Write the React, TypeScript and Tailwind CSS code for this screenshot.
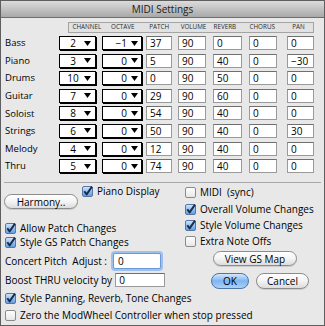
import React from "react";

const rows = [
  { name: "Bass", ch: "2", oct: "-1", vals: ["37", "90", "0", "0", "0"] },
  { name: "Piano", ch: "3", oct: "0", vals: ["5", "90", "40", "0", "-30"] },
  { name: "Drums", ch: "10", oct: "0", vals: ["0", "90", "50", "0", "0"] },
  { name: "Guitar", ch: "7", oct: "0", vals: ["29", "90", "60", "0", "0"] },
  { name: "Soloist", ch: "8", oct: "0", vals: ["54", "90", "40", "0", "0"] },
  { name: "Strings", ch: "6", oct: "0", vals: ["50", "90", "40", "0", "30"] },
  { name: "Melody", ch: "4", oct: "0", vals: ["12", "90", "40", "0", "0"] },
  { name: "Thru", ch: "5", oct: "0", vals: ["74", "90", "40", "0", "0"] },
];

const Tri = () => (
  <svg width="7" height="5" viewBox="0 0 7 5" className="shrink-0">
    <polygon points="0,0 7,0 3.5,5" fill="#000" />
  </svg>
);

const Box = ({ v, cls }: { v: string; cls: string }) => (
  <div
    className={`h-[14px] ${cls} bg-white border border-[#9a9a9a] border-t-[#6f6f6f] flex items-center pl-[3px] text-[10px] leading-none text-black`}
  >
    {v}
  </div>
);

const Check = ({ on }: { on: boolean }) =>
  on ? (
    <svg width="11" height="11" viewBox="0 0 11 11" className="shrink-0 overflow-visible">
      <defs>
        <linearGradient id="cbg" x1="0" y1="0" x2="0" y2="1">
          <stop offset="0" stopColor="#d6e8fb" />
          <stop offset="0.5" stopColor="#93bff0" />
          <stop offset="1" stopColor="#5f9be2" />
        </linearGradient>
      </defs>
      <rect x="0.5" y="0.5" width="10" height="10" rx="1.5" fill="url(#cbg)" stroke="#5576a6" />
      <path d="M2.3 5.2 L4.6 8.4 L10 0.6" stroke="#1a2b47" strokeWidth="1.9" fill="none" strokeLinejoin="round" />
    </svg>
  ) : (
    <svg width="11" height="11" viewBox="0 0 11 11" className="shrink-0">
      <defs>
        <linearGradient id="cbw" x1="0" y1="0" x2="0" y2="1">
          <stop offset="0" stopColor="#ffffff" />
          <stop offset="1" stopColor="#e6e6e6" />
        </linearGradient>
      </defs>
      <rect x="0.5" y="0.5" width="10" height="10" rx="1.5" fill="url(#cbw)" stroke="#8a8a8a" />
    </svg>
  );

const CB = ({ on, label, cls = "" }: { on: boolean; label: string; cls?: string }) => (
  <div className={`h-[14px] flex items-center gap-[4px] text-[10px] leading-none text-black whitespace-nowrap ${cls}`}>
    <Check on={on} />
    <span>{label}</span>
  </div>
);

const Pill = ({ label, cls }: { label: string; cls: string }) => (
  <div
    className={`${cls} rounded-full border border-[#8c8c8c] bg-gradient-to-b from-[#ffffff] via-[#f4f4f4] to-[#dcdcdc] flex items-center justify-center text-[10px] leading-none text-black shadow-[0_1px_0_rgba(0,0,0,0.12)]`}
  >
    {label}
  </div>
);

export default function App() {
  return (
    <div
      className="w-[325px] h-[326px] overflow-hidden bg-[#e8e8e8] border border-[#5e5e5e] flex flex-col"
      style={{ fontFamily: '"Open Sans", "DejaVu Sans", sans-serif' }}
    >
      {/* title */}
      <div className="h-[17px] shrink-0 bg-gradient-to-b from-[#dcdcdc] to-[#a9a9a9] border-b border-[#6e6e6e] flex items-center justify-center text-[10px] text-[#1a1a1a] leading-none">
        MIDI Settings
      </div>

      {/* header */}
      <div className="mt-[4px] ml-[67px] w-[246px] h-[11px] border border-[#a4a4a4] bg-[#e2e2e2] flex items-center text-[6.3px] leading-none text-[#2a2a2a]">
        <span className="w-[36px] text-center">CHANNEL</span>
        <span className="w-[36px] text-center">OCTAVE</span>
        <span className="w-[37px] text-center">PATCH</span>
        <span className="w-[32px] text-center">VOLUME</span>
        <span className="w-[31px] text-center">REVERB</span>
        <span className="w-[44px] text-center">CHORUS</span>
        <span className="w-[29px] text-center">PAN</span>
      </div>

      {/* rows */}
      <div className="mt-[3px] flex flex-col gap-[3.6px]">
        {rows.map((r) => (
          <div key={r.name} className="h-[14px] flex items-center">
            <div className="w-[58px] pl-[4px] text-[9.5px] leading-none text-black">{r.name}</div>
            <div className="w-[37px] h-[14px] bg-white border border-black shadow-[1px_1px_0_#000] flex items-center pr-[4px] text-[10px] leading-none">
              <span className="flex-1 text-center pl-[2px]">{r.ch}</span>
              <Tri />
            </div>
            <div className="ml-[6px] w-[40px] h-[14px] bg-white border border-black shadow-[1px_1px_0_#000] flex items-center justify-end pr-[3px] gap-[4px] text-[10px] leading-none">
              <span>{r.oct === "-1" ? "\u22121" : r.oct}</span>
              <Tri />
            </div>
            <Box v={r.vals[0]} cls="ml-[4px] w-[26px]" />
            <Box v={r.vals[1]} cls="ml-[6px] w-[28px]" />
            <Box v={r.vals[2]} cls="ml-[7px] w-[29px]" />
            <Box v={r.vals[3]} cls="ml-[7px] w-[28px]" />
            <Box v={r.vals[4] === "-30" ? "\u221230" : r.vals[4]} cls="ml-[10px] w-[27px]" />
          </div>
        ))}
      </div>

      {/* separator */}
      <div className="mt-[9px] mx-[3px] h-[1px] bg-[#a8a8a8] shrink-0" />

      {/* lower section */}
      <div className="flex">
        <div className="w-[184px] flex flex-col">
          <div className="flex items-start">
            <Pill label="Harmony.." cls="mt-[11px] ml-[3px] w-[74px] h-[15px]" />
            <CB on label="Piano Display" cls="ml-[4px] mt-[1px]" />
          </div>
          <CB on label="Allow Patch Changes" cls="mt-[12px] ml-[4px]" />
          <CB on label="Style GS Patch Changes" cls="ml-[4px]" />
          <div className="mt-[4px] flex items-center h-[16px] text-[10px] leading-none">
            <span className="ml-[4px] whitespace-pre">Concert Pitch  Adjust :</span>
            <div className="ml-[6px] w-[48px] h-[16px] rounded-[2px] border border-[#6d9ad6] shadow-[0_0_0_2px_#9ec1ec] bg-white flex items-center pl-[4px]">
              0
            </div>
          </div>
          <div className="mt-[4px] flex items-center h-[14px] text-[10px] leading-none">
            <span className="ml-[4px] whitespace-nowrap">Boost THRU velocity by</span>
            <Box v="0" cls="ml-[3px] w-[50px]" />
          </div>
        </div>
        <div className="flex flex-col">
          <CB on={false} label="MIDI  (sync)" cls="mt-[2px] whitespace-pre" />
          <CB on label="Overall Volume Changes" cls="mt-[3px]" />
          <CB on label="Style Volume Changes" cls="mt-[2px]" />
          <CB on={false} label="Extra Note Offs" cls="mt-[2px]" />
          <Pill label="View GS Map" cls="mt-[3px] ml-[28px] w-[84px] h-[15px]" />
          <div className="mt-[7px] ml-[26px] flex gap-[7px]">
            <div className="w-[38px] h-[16px] rounded-full border border-[#4e74a8] bg-gradient-to-b from-[#d3e8fc] via-[#7fb5f0] to-[#a9d2f8] flex items-center justify-center text-[10px] leading-none text-black">
              OK
            </div>
            <Pill label="Cancel" cls="w-[53px] h-[16px]" />
          </div>
        </div>
      </div>
      <CB on label="Style Panning, Reverb, Tone Changes" cls="mt-[2px] ml-[4px]" />
      <CB on={false} label="Zero the ModWheel Controller when stop pressed" cls="mt-[3px] ml-[4px]" />
    </div>
  );
}
